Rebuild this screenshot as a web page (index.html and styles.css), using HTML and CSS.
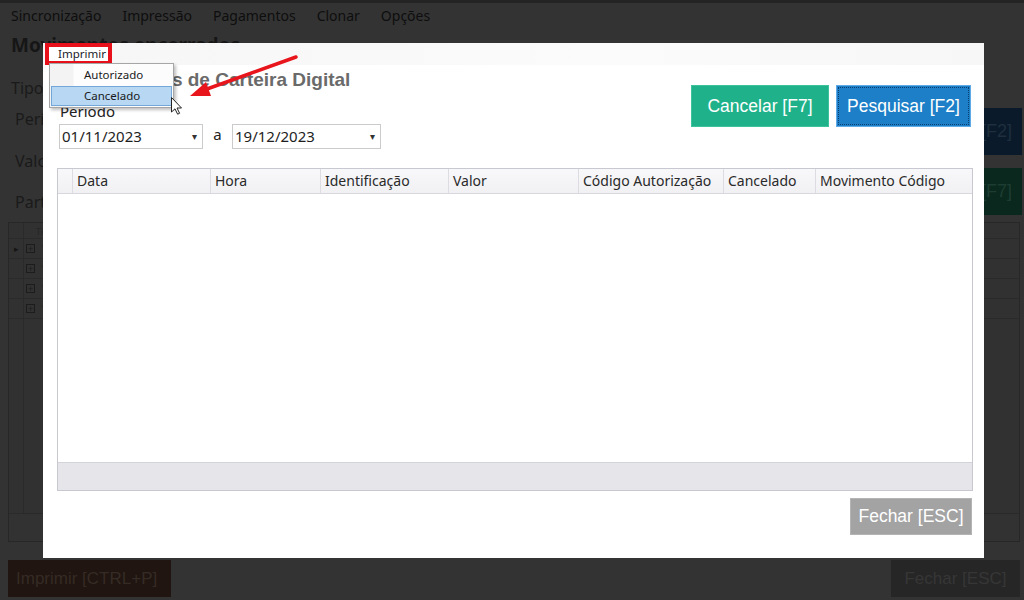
FILE: index.html
```html
<!DOCTYPE html>
<html lang="pt-BR">
<head>
    <meta charset="UTF-8">
    <title>Movimentos de Carteira Digital</title>
    <link rel="stylesheet" href="styles.css">
</head>
<body>
    <!-- tela de fundo (escurecida pelo modal) -->
    <div class="app">
        <div class="topline"></div>
        <div class="menubar">
            <span>Sincronização</span>
            <span>Impressão</span>
            <span>Pagamentos</span>
            <span>Clonar</span>
            <span>Opções</span>
        </div>
        <div class="app-title">Movimentos encerrados</div>
        <div class="form">
            <div class="labels">
                <div class="lbl tipo">Tipo</div>
                <div class="lbl periodo">Período</div>
                <div class="lbl valor">Valor</div>
                <div class="lbl partic">Participante</div>
            </div>
            <div class="side-btns">
                <div class="bg-btn bg-btn-search">Pesquisar [F2]</div>
                <div class="bg-btn bg-btn-cancel">Cancelar [F7]</div>
            </div>
        </div>
        <div class="grid">
            <div class="g-head"><span class="g-ind"></span><span class="g-col">Tipo</span></div>
            <div class="g-row"><span class="g-ind">&#9656;</span><span class="g-plus">+</span><span class="g-txt">V</span></div>
            <div class="g-row"><span class="g-ind"></span><span class="g-plus">+</span><span class="g-txt">V</span></div>
            <div class="g-row"><span class="g-ind"></span><span class="g-plus">+</span><span class="g-txt">V</span></div>
            <div class="g-row"><span class="g-ind"></span><span class="g-plus">+</span><span class="g-txt">V</span></div>
            <div class="g-fill"></div>
            <div class="g-foot"></div>
        </div>
        <div class="bottombar">
            <div class="bbtn bbtn-print">Imprimir [CTRL+P]</div>
            <div class="bbtn bbtn-close">Fechar [ESC]</div>
        </div>
    </div>

    <!-- modal -->
    <div class="dialog">
        <div class="dlg-menu">
            <span class="dlg-menu-item">Imprimir</span>
        </div>
        <div class="dlg-body">
            <div class="dlg-top">
                <div class="filters">
                    <div class="dlg-title">Lançamentos de Carteira Digital</div>
                    <div class="dlg-label">Período</div>
                    <div class="dates">
                        <div class="date d1">01/11/2023<span class="caret">&#9662;</span></div>
                        <span class="date-sep">a</span>
                        <div class="date d2">19/12/2023<span class="caret">&#9662;</span></div>
                    </div>
                </div>
                <div class="actions">
                    <div class="btn btn-cancel">Cancelar [F7]</div>
                    <div class="btn btn-search">Pesquisar [F2]</div>
                </div>
            </div>
            <div class="table">
                <div class="t-head">
                    <span class="th ind"></span>
                    <span class="th c1">Data</span>
                    <span class="th c2">Hora</span>
                    <span class="th c3">Identificação</span>
                    <span class="th c4">Valor</span>
                    <span class="th c5">Código Autorização</span>
                    <span class="th c6">Cancelado</span>
                    <span class="th c7">Movimento Código</span>
                </div>
                <div class="t-body"></div>
                <div class="t-foot"></div>
            </div>
            <div class="dlg-bottom">
                <div class="btn btn-close">Fechar [ESC]</div>
            </div>
        </div>

        <div class="dropdown">
            <div class="dd-item">Autorizado</div>
            <div class="dd-item active">Cancelado</div>
        </div>
    </div>

    <!-- seta vermelha de destaque + cursor -->
    <svg class="annot" width="1024" height="600" viewBox="0 0 1024 600">
        <line x1="296" y1="57" x2="207" y2="89" stroke="#e8161c" stroke-width="3.5" stroke-linecap="round"/>
        <polygon points="190,96 211,96 206,82" fill="#e8161c"/>
        <path d="M171.5 97.5 L171.5 112 L175 108.8 L177.6 114.2 L179.6 113.3 L177 108 L181.5 108 Z" fill="#fff" stroke="#222" stroke-width="1"/>
    </svg>
</body>
</html>
```

FILE: styles.css
```css
*{
    margin: 0;
    padding: 0;
    box-sizing: border-box;
}
body{
    width: 1024px;
    height: 600px;
    overflow: hidden;
    background: #333;
    font-family: "Noto Sans", "Open Sans", sans-serif;
    position: relative;
}

/* ---------- fundo ---------- */
.app{
    width: 1024px;
    height: 600px;
    display: flex;
    flex-direction: column;
    color: #141414;
}
.topline{
    height: 3px;
    background: #242424;
}
.menubar{
    height: 24px;
    display: flex;
    align-items: center;
    gap: 21px;
    padding-left: 11px;
    font-size: 14px;
    color: #0e0e0e;
}
.app-title{
    margin-top: 6px;
    height: 24px;
    line-height: 24px;
    padding-left: 11px;
    font-size: 19px;
    font-weight: bold;
    color: #161616;
}
.form{
    height: 165px;
    display: flex;
    justify-content: space-between;
}
.lbl{
    font-size: 16px;
    line-height: 20px;
    color: #1a1a1a;
}
.tipo{ margin: 21px 0 0 11px; }
.periodo{ margin: 11px 0 0 15px; }
.valor{ margin: 22px 0 0 15px; }
.partic{ margin: 21px 0 0 15px; }
.side-btns{
    margin-top: 51px;
    margin-right: 2px;
    display: flex;
    flex-direction: column;
    gap: 13px;
}
.bg-btn{
    width: 160px;
    height: 47px;
    line-height: 47px;
    text-align: right;
    padding-right: 10px;
    font-family: "Liberation Sans", Arial, sans-serif;
    font-size: 18px;
}
.bg-btn-search{
    background-color: rgb(10, 26, 42);
    color: rgb(31, 47, 62);
}
.bg-btn-cancel{
    background-color: rgb(10, 40, 29);
    color: rgb(30, 61, 50);
}

.grid{
    margin: 0 4px 0 8px;
    height: 320px;
    border: 1px solid #272727;
    background: #313131;
    display: flex;
    flex-direction: column;
}
.g-head, .g-row{
    display: flex;
    border-bottom: 1px solid #2a2a2a;
}
.g-head{ height: 16px; }
.g-row{ height: 20px; align-items: center; }
.g-ind{
    width: 15px;
    height: 100%;
    border-right: 1px solid #2a2a2a;
    font-size: 9px;
    color: #151515;
    display: flex;
    align-items: center;
    justify-content: center;
}
.g-col{
    font-size: 9px;
    color: #262626;
    padding: 2px 0 0 12px;
}
.g-plus{
    margin-left: 2px;
    width: 9px;
    height: 9px;
    border: 1px solid #1c1c1c;
    font-size: 9px;
    line-height: 7px;
    text-align: center;
    color: #1c1c1c;
}
.g-txt{
    margin-left: 7px;
    font-size: 11px;
    color: #262626;
}
.g-fill{
    flex: 1;
    width: 15px;
    border-right: 1px solid #2a2a2a;
}
.g-foot{
    height: 28px;
    border-top: 1px solid #2a2a2a;
    background: #323232;
}
.bottombar{
    margin-top: 18px;
    height: 37px;
    padding: 0 4px 0 8px;
    display: flex;
    justify-content: space-between;
}
.bbtn{
    height: 37px;
    line-height: 37px;
    font-family: "Liberation Sans", Arial, sans-serif;
    font-size: 17px;
    padding: 0 8px;
}
.bbtn-print{
    width: 163px;
    background: #201510;
    color: #352b25;
}
.bbtn-close{
    width: 129px;
    background: #262626;
    color: #363636;
    text-align: center;
}

/* ---------- modal ---------- */
.dialog{
    position: absolute;
    left: 43px;
    top: 43px;
    width: 941px;
    height: 515px;
    background: #fff;
}
.dlg-menu{
    height: 22px;
    background: linear-gradient(90deg, #f6f6f6, #fbfbfb 60%, #f7f7f7);
    display: flex;
    padding-left: 2px;
}
.dlg-menu-item{
    height: 22px;
    width: 67px;
    border: 4px solid #e8101a;
    font-size: 11.5px;
    line-height: 14px;
    padding-left: 9px;
    color: #1a1a2a;
    background: #fff;
}
.dlg-body{
    padding: 0 11px 0 14px;
}
.dlg-top{
    display: flex;
    justify-content: space-between;
    align-items: flex-start;
}
.filters{
    padding-left: 2px;
}
.dlg-title{
    margin-top: 4px;
    padding-left: 1px;
    height: 22px;
    line-height: 22px;
    font-family: "Liberation Sans", Arial, sans-serif;
    font-size: 19px;
    font-weight: bold;
    color: #6a6a6a;
    white-space: nowrap;
}
.dlg-label{
    margin-top: 10px;
    padding-left: 1px;
    font-size: 15px;
    line-height: 20px;
    color: #222;
}
.dates{
    margin-top: 3px;
    display: flex;
    align-items: center;
}
.date{
    position: relative;
    height: 25px;
    border: 1px solid #cbcbcb;
    font-size: 15px;
    line-height: 23px;
    padding-left: 2px;
    color: #1e1e1e;
}
.d1{ width: 144px; }
.d2{ width: 149px; }
.caret{
    position: absolute;
    right: 5px;
    top: 0;
    font-size: 10px;
    color: #333;
}
.date-sep{
    width: 29px;
    text-align: center;
    font-size: 15px;
    color: #222;
    margin-top: -6px;
}
.actions{
    margin-top: 20px;
    margin-right: 2px;
    display: flex;
    gap: 7px;
}
.btn{
    height: 42px;
    line-height: 40px;
    text-align: center;
    font-family: "Liberation Sans", Arial, sans-serif;
    font-size: 17.5px;
    color: #fff;
}
.btn-cancel{
    width: 138px;
    background: #1fb28a;
    border: 1px solid #3cc29c;
}
.btn-search{
    position: relative;
    width: 135px;
    background: #1c7fc8;
    border: 1px solid #5fa9e6;
}
.btn-search::after{
    content: "";
    position: absolute;
    inset: 1px;
    border: 1px dotted #0b3f6e;
}
.table{
    margin-top: 19px;
    height: 323px;
    border: 1px solid #c8c8d0;
    display: flex;
    flex-direction: column;
}
.t-head{
    height: 25px;
    display: flex;
    background: linear-gradient(#f8f8fa, #f1f1f4);
    border-bottom: 1px solid #d7d7dd;
}
.th{
    height: 24px;
    line-height: 24px;
    padding-left: 4px;
    font-size: 14px;
    color: #2a2a2a;
    border-right: 1px solid #dcdce2;
    white-space: nowrap;
    overflow: hidden;
}
.th.ind{ width: 15px; padding: 0; }
.c1{ width: 138px; }
.c2{ width: 110px; }
.c3{ width: 128px; }
.c4{ width: 130px; }
.c5{ width: 145px; }
.c6{ width: 92px; }
.c7{ flex: 1; border-right: none; }
.t-body{
    flex: 1;
    background: #fff;
}
.t-foot{
    height: 28px;
    background: #e6e6ea;
    border-top: 1px solid #d3d3da;
}
.dlg-bottom{
    margin-top: 7px;
    display: flex;
    justify-content: flex-end;
    padding-right: 1px;
}
.btn-close{
    width: 122px;
    height: 37px;
    line-height: 35px;
    background: #a3a3a3;
    border: 1px solid #b4b4b4;
}

/* menu suspenso aberto */
.dropdown{
    position: absolute;
    left: 6px;
    top: 20px;
    width: 125px;
    height: 45px;
    border: 1px solid #a6a6a6;
    background: linear-gradient(90deg, #f3f3f3 0, #f3f3f3 23px, #fdfdfd 24px, #fcfcfc);
    box-shadow: 2px 2px 3px rgba(0, 0, 0, .25);
    padding-top: 1px;
}
.dd-item{
    height: 20px;
    line-height: 19px;
    padding-left: 34px;
    font-size: 11.5px;
    color: #1a1a1a;
}
.dd-item.active{
    margin: 1px 1px 0 1px;
    background: #b7d7f3;
    border: 1px solid #72a7d8;
    padding-left: 32px;
    line-height: 17px;
}

.annot{
    position: absolute;
    left: 0;
    top: 0;
    pointer-events: none;
}
```
